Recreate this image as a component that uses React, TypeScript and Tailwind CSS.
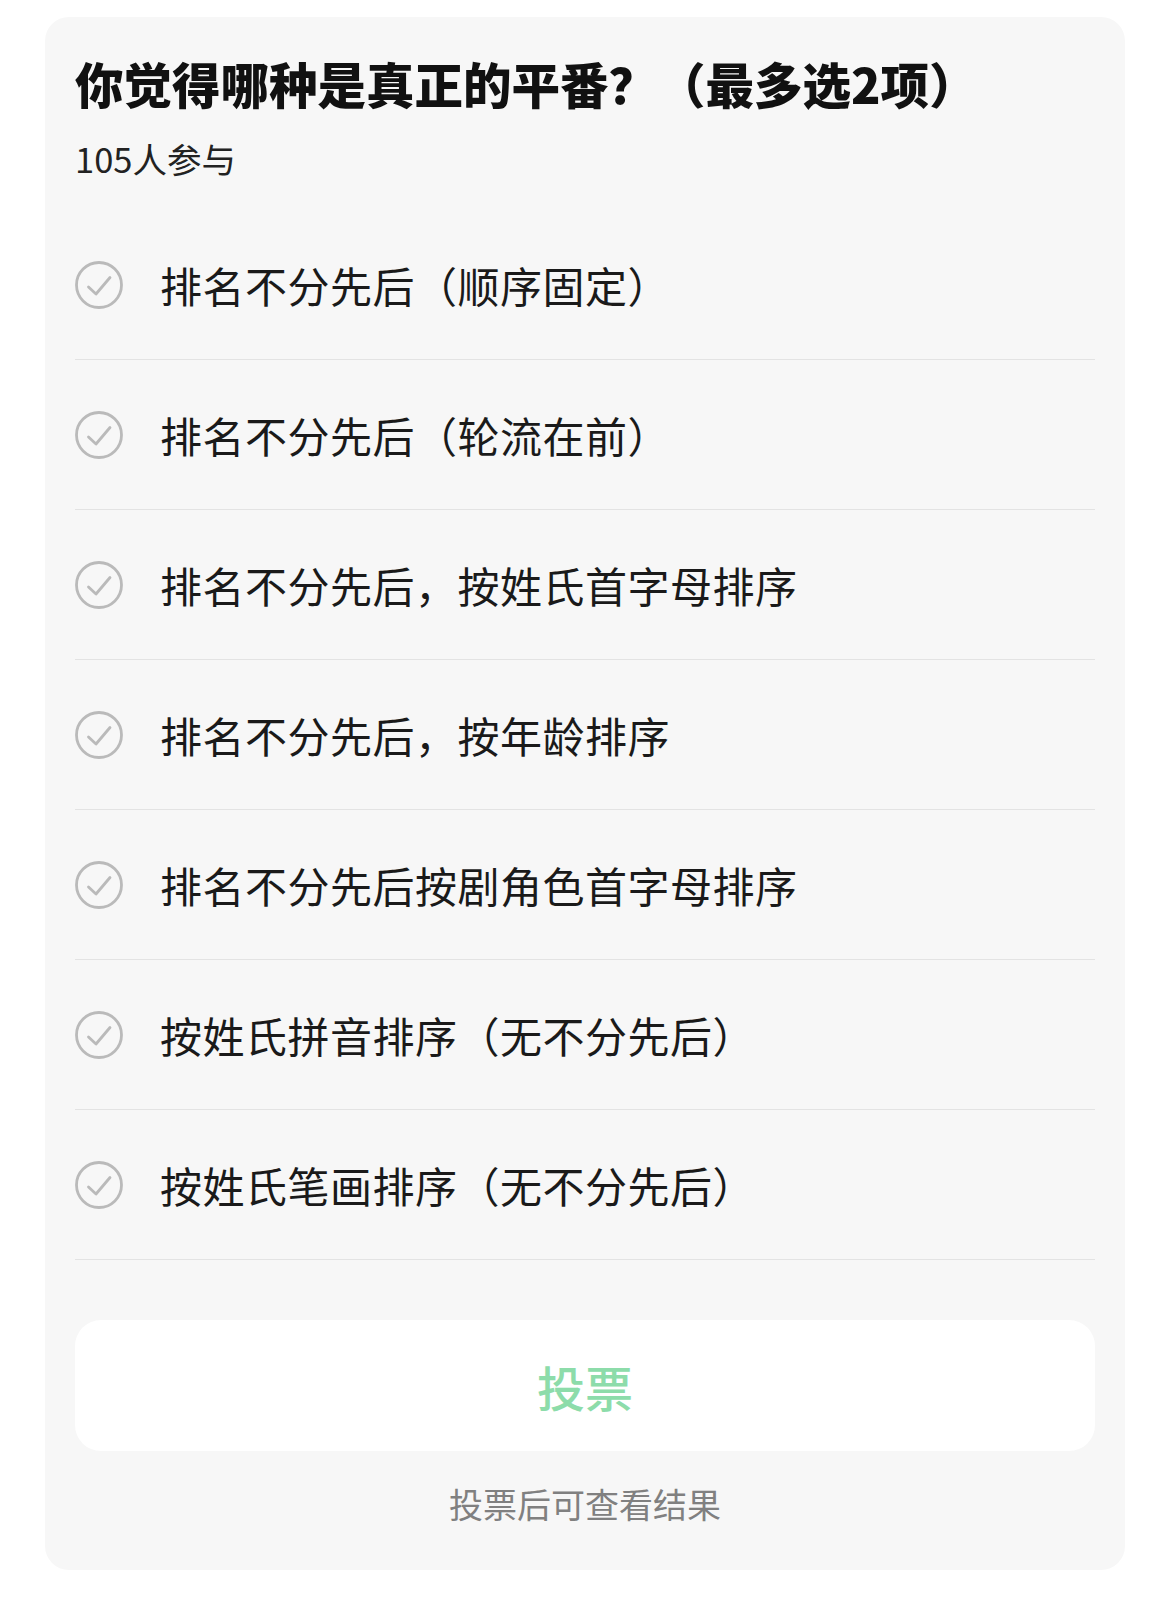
import React from 'react';

const options = [
  '排名不分先后（顺序固定）',
  '排名不分先后（轮流在前）',
  '排名不分先后，按姓氏首字母排序',
  '排名不分先后，按年龄排序',
  '排名不分先后按剧角色首字母排序',
  '按姓氏拼音排序（无不分先后）',
  '按姓氏笔画排序（无不分先后）',
];

function CheckCircle() {
  return (
    <svg width="48" height="48" viewBox="0 0 48 48" className="shrink-0">
      <circle cx="24" cy="24" r="22.5" fill="none" stroke="#bababa" strokeWidth="2.8" />
      <path d="M13.5 26 L21 33 L35 16.5" fill="none" stroke="#bababa" strokeWidth="2.8" strokeLinecap="round" strokeLinejoin="round" />
    </svg>
  );
}

export default function App() {
  return (
    <div
      className="w-[1170px] h-[1614px] bg-white pt-[17px] pl-[45px]"
      style={{ fontFamily: '"Noto Sans CJK SC", "Noto Sans", sans-serif' }}
    >
      <div className="w-[1080px] h-[1553px] bg-[#f7f7f7] rounded-[24px] px-[30px] pt-[36px] flex flex-col">
        <h1 className="text-[48.5px] leading-[60px] font-black text-[#111]">
          你觉得哪种是真正的平番？（最多选2项）
        </h1>
        <p className="mt-[24px] text-[34.5px] leading-[42px] text-[#222]">105人参与</p>

        <div className="mt-[31px] flex flex-col">
          {options.map((opt, i) => (
            <div key={i} className="h-[150px] border-b border-[#e3e3e3] flex items-center gap-[37px]">
              <CheckCircle />
              <span className="text-[42px] leading-[50px] text-[#1a1a1a] tracking-[0.5px]">{opt}</span>
            </div>
          ))}
        </div>

        <button className="mt-[60px] h-[131px] w-full bg-white rounded-[26px] flex items-center justify-center text-[48px] font-medium text-[#8ddcaa]">
          投票
        </button>

        <p className="mt-[32px] text-center text-[34px] leading-[42px] text-[#808080]">投票后可查看结果</p>
      </div>
    </div>
  );
}
